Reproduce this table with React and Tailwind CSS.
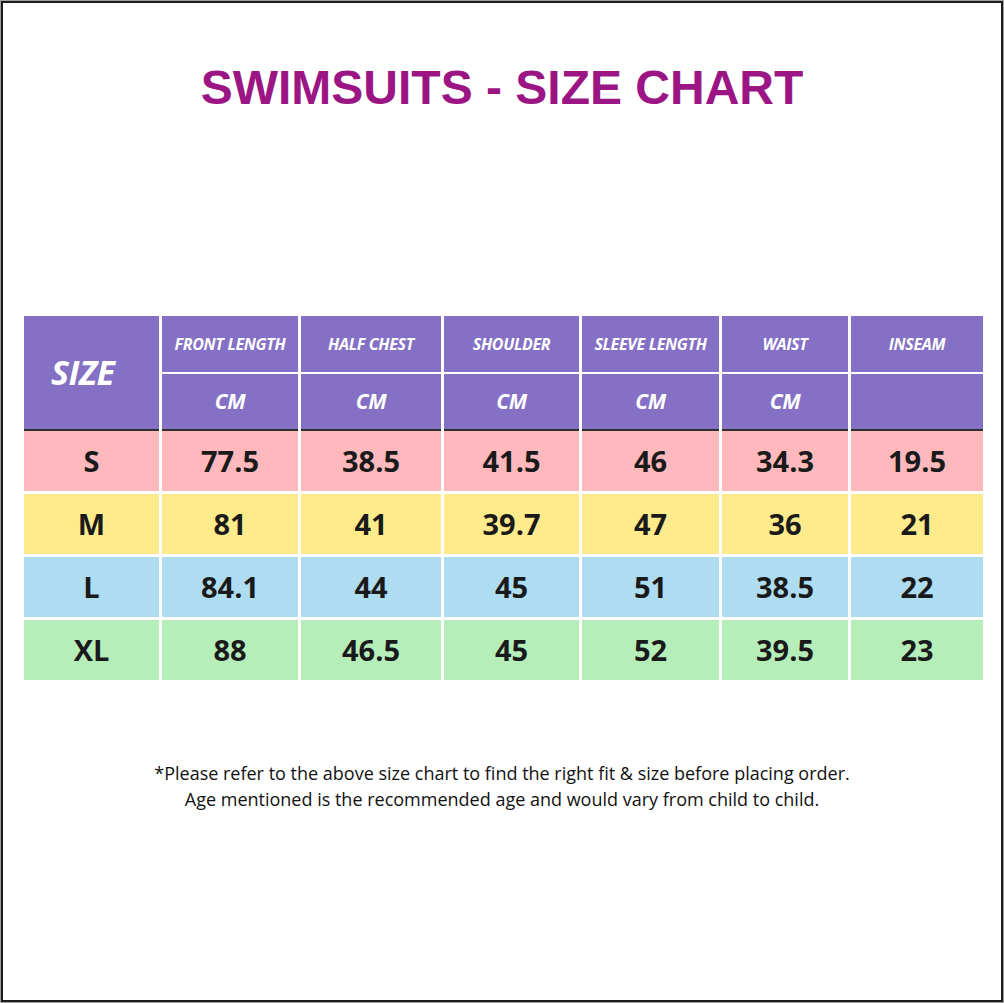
import React from 'react';

const cols = 'grid-cols-[135px_136px_140px_135px_137px_126px_132px]';

const headers = [
  { label: 'FRONT LENGTH', unit: 'CM' },
  { label: 'HALF CHEST', unit: 'CM' },
  { label: 'SHOULDER', unit: 'CM' },
  { label: 'SLEEVE LENGTH', unit: 'CM' },
  { label: 'WAIST', unit: 'CM' },
  { label: 'INSEAM', unit: '' },
];

const rows = [
  { size: 'S', bg: 'bg-[#ffb8bb]', values: ['77.5', '38.5', '41.5', '46', '34.3', '19.5'] },
  { size: 'M', bg: 'bg-[#ffeb8c]', values: ['81', '41', '39.7', '47', '36', '21'] },
  { size: 'L', bg: 'bg-[#aedcf1]', values: ['84.1', '44', '45', '51', '38.5', '22'] },
  { size: 'XL', bg: 'bg-[#b6eeba]', values: ['88', '46.5', '45', '52', '39.5', '23'] },
];

const App = () => {
  return (
    <div className="w-[1004px] h-[1003px] bg-[#a0a0a0] p-px">
      <div className="w-full h-full border-2 border-[#1c1c1c] bg-white flex flex-col font-['Open_Sans',sans-serif]">
        {/* Title */}
        <h1 className="pt-[61px] text-center text-[48px] leading-none font-bold text-[#9c1584] font-['Liberation_Sans',Arial,sans-serif]">
          SWIMSUITS - SIZE CHART
        </h1>

        {/* Size table */}
        <div className="mt-[204px] ml-[21px] w-[959px]">
          {/* Header */}
          <div className={`grid ${cols} gap-x-[3px] gap-y-[2px] grid-rows-[56px_57px]`}>
            <div className="row-span-2 bg-[#8470c4] border-b-2 border-[#2e2e2e] flex items-center pl-[27px] text-white italic font-bold text-[34px] tracking-[-0.5px]">
              SIZE
            </div>
            {headers.map((h) => (
              <div
                key={h.label}
                className="bg-[#8470c4] flex items-center justify-center text-white italic font-bold text-[16px] tracking-[-0.3px]"
              >
                {h.label}
              </div>
            ))}
            {headers.map((h) => (
              <div
                key={h.label + '-unit'}
                className="bg-[#8470c4] border-b-2 border-[#2e2e2e] flex items-center justify-center text-white italic font-bold text-[21px] tracking-[-0.3px]"
              >
                {h.unit}
              </div>
            ))}
          </div>

          {/* Body */}
          <div className={`grid ${cols} gap-[3px] auto-rows-[60px]`}>
            {rows.map((r) => (
              <React.Fragment key={r.size}>
                <div className={`${r.bg} flex items-center justify-center text-[#1a1a1a] font-bold text-[29px]`}>
                  {r.size}
                </div>
                {r.values.map((v, i) => (
                  <div
                    key={r.size + i}
                    className={`${r.bg} flex items-center justify-center text-[#1a1a1a] font-bold text-[29px]`}
                  >
                    {v}
                  </div>
                ))}
              </React.Fragment>
            ))}
          </div>
        </div>

        {/* Note */}
        <div className="mt-[80px] text-center text-[18px] leading-[26px] text-[#111]">
          <p>*Please refer to the above size chart to find the right fit &amp; size before placing order.</p>
          <p>Age mentioned is the recommended age and would vary from child to child.</p>
        </div>
      </div>
    </div>
  );
};

export default App;
